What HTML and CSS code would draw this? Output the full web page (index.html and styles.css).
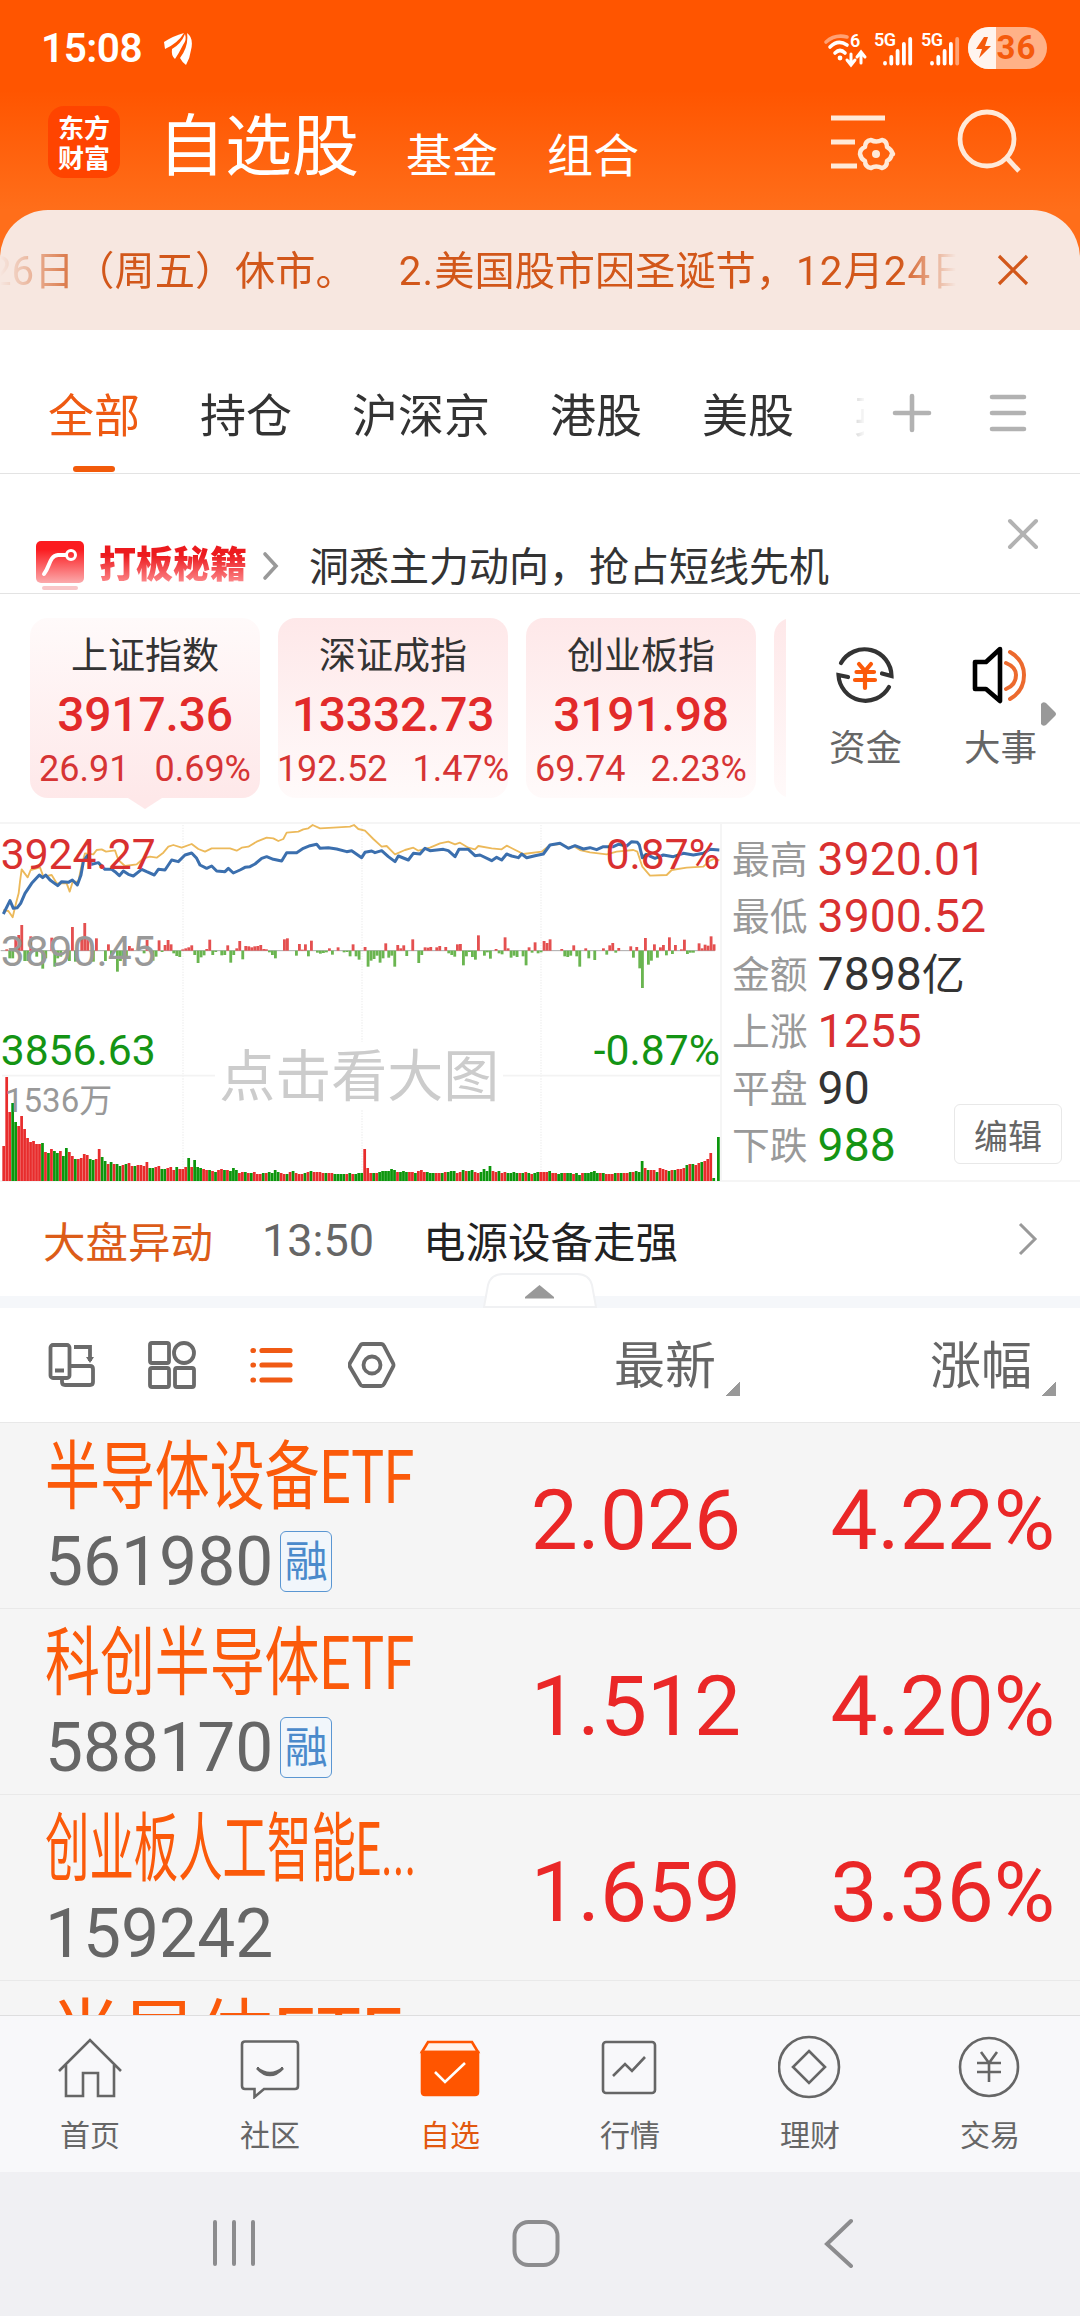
FILE: index.html
```html
<!doctype html>
<html lang="zh-CN">
<head>
    <meta charset="utf-8">
    <title>自选股</title>
    <meta name="viewport" content="width=1080">
    <link rel="stylesheet" href="styles.css">
</head>
<body>
<div class="header">
    <div class="status">
        <span class="clock">15:08</span>
        <svg class="status-app" width="30" height="34" viewBox="0 0 30 34" fill="#fff">
            <path d="M1 10 Q10 4 21 1 Q15 11 2 17 Z"></path>
            <path d="M22 2 Q24 8 20 13 Q16 21 12 27 Q8 24 9 17 Q18 12 22 2 Z"></path>
            <path d="M24 1 Q31 6 28 18 Q27 26 23 33 Q19 30 17 26 Q26 14 24 1 Z"></path>
        </svg>
        <svg class="status-icons" width="226" height="44" viewBox="822 26 226 44">
            <g fill="none" stroke="#fff" stroke-width="3.6" stroke-linecap="round">
                <path d="M826 42 Q835 34 847 37" opacity=".45"></path>
                <path d="M830 47 Q838 39 847 45"></path>
                <path d="M835 53 Q840 48 845 53"></path>
                <path d="M851 54 V64 M847 60 L851 65 L855 60 M861 63 V53 M857 57 L861 52 L865 57" stroke-width="3"></path>
            </g>
            <circle cx="840" cy="58" r="2.4" fill="#fff"></circle>
            <g class="status-text">
                <text x="850" y="47" font-size="18">6</text>
                <text x="874" y="46" font-size="18" textLength="22">5G</text>
                <text x="921" y="46" font-size="18" textLength="22">5G</text>
            </g>
            <g stroke="#fff" stroke-width="3.8" stroke-linecap="round">
                <path d="M885 63 V63.5 M891.300 57 V63.500 M897.600 51 V63.500 M903.900 44 V63.500 M910.200 39 V63.500"></path>
                <path d="M932 63 V63.5 M938.300 57 V63.500 M944.600 51 V63.500 M950.900 44 V63.500"></path>
                <path d="M957.200 39 V63.500" opacity=".45"></path>
            </g>
            <rect x="968" y="27" width="79" height="42" rx="21" fill="#ffb187"></rect>
            <path d="M996 27 H989 A21 21 0 0 0 989 69 H996 Z" fill="#fff4ef"></path>
            <path d="M984 37 L976 49 H982 L979 58 L991 46 H985 L988 37 Z" fill="#f55a0c"></path>
            <text x="996.500" y="59" font-size="33" font-weight="700" fill="#f55a0c" textLength="39">36</text>
        </svg>
    </div>
    <div class="title-bar">
        <div class="logo"><div>东方</div><div>财富</div></div>
        <h1>自选股</h1>
        <span class="sub-title">基金</span>
        <span class="sub-title">组合</span>
        <svg class="manage" width="60" height="60" viewBox="828 112 60 60" fill="none" stroke="#ffe9d8" stroke-width="5">
            <path d="M831 118 H885 M831 142 H855 M831 166 H857"></path>
            <path d="M893 154 Q891 149 887 147 Q887 141 882 140 Q876 143 871 140 Q865 141 865 147 Q860 149 860 154 Q861 159 865 161 Q865 167 871 168 Q876 165 882 168 Q887 167 887 161 Q891 159 892 154 Z" stroke-width="4.500" stroke-linejoin="round"></path>
            <circle cx="876" cy="154" r="4" fill="#ffe9d8" stroke="none"></circle>
        </svg>
        <svg class="search" width="66" height="66" viewBox="956 108 66 66" fill="none" stroke="#ffe9d8" stroke-width="4.800">
            <circle cx="987" cy="139" r="27"></circle>
            <path d="M1006 157 L1019 171"></path>
        </svg>
    </div>
</div>

<div class="notice">
    <div class="notice-text"><span>26日（周五）休市。</span><span><em>2.</em>美国股市因圣诞节，<em>12</em>月<em>24</em>日</span></div>
    <svg width="32" height="32" viewBox="0 0 32 32" stroke="#d2571a" stroke-width="3.200">
        <path d="M2 2 L30 30 M30 2 L2 30"></path>
    </svg>
</div>

<div class="tabs">
    <div class="tab-list">
        <span class="active">全部</span><span>持仓</span><span>沪深京</span><span>港股</span><span>美股</span><span>英股</span>
    </div>
    <svg width="40" height="40" viewBox="0 0 40 40" stroke="#b2b2b2" stroke-width="4.600" stroke-linecap="round">
        <path d="M3 20 H37 M20 3 V37"></path>
    </svg>
    <svg width="40" height="40" viewBox="0 0 40 40" stroke="#b2b2b2" stroke-width="4.600" stroke-linecap="round">
        <path d="M4 4 H36 M4 20 H36 M4 36 H36"></path>
    </svg>
</div>

<div class="promo">
    <svg width="48" height="50" viewBox="0 0 48 50">
        <defs>
            <linearGradient id="promo-red" x1="0" y1="0" x2="0" y2="1">
                <stop offset=".2" stop-color="#fb1b1f"></stop>
                <stop offset="1" stop-color="#fbaaac"></stop>
            </linearGradient>
        </defs>
        <rect width="48" height="42" rx="5" fill="url(#promo-red)"></rect>
        <rect x="6" y="45" width="36" height="4" rx="2" fill="#f8c6c8"></rect>
        <path d="M8 33 C14 26 13 15 22 14 H30" fill="none" stroke="#fff" stroke-width="4" stroke-linecap="round"></path>
        <circle cx="35" cy="14" r="4.500" fill="none" stroke="#fff" stroke-width="3"></circle>
    </svg>
    <b>打板秘籍</b>
    <svg width="18" height="30" viewBox="0 0 18 30" fill="none" stroke="#999" stroke-width="3.600" stroke-linecap="round">
        <path d="M3 3 L14 15 L3 27"></path>
    </svg>
    <span>洞悉主力动向，抢占短线先机</span>
    <svg class="promo-close" width="32" height="32" viewBox="0 0 32 32" stroke="#b2b2b2" stroke-width="4" stroke-linecap="round">
        <path d="M3 3 L29 29 M29 3 L3 29"></path>
    </svg>
</div>

<div class="indices">
    <div class="index-list">
        <div class="index current"><p>上证指数</p><b>3917.36</b><div><span>26.91</span><span>0.69%</span></div></div>
        <div class="index"><p>深证成指</p><b>13332.73</b><div><span>192.52</span><span>1.47%</span></div></div>
        <div class="index"><p>创业板指</p><b>3191.98</b><div><span>69.74</span><span>2.23%</span></div></div>
        <div class="index"></div>
    </div>
    <div class="shortcut">
        <svg width="64" height="64" viewBox="0 0 64 64" fill="none" stroke="#333" stroke-width="4.200">
            <path d="M8 20 A27 27 0 0 1 58.500 33 L49 30.500" stroke-linecap="round"></path>
            <path d="M56 44 A27 27 0 0 1 5.500 32 L15 34" stroke-linecap="round"></path>
            <path d="M26 21 L32 28 L38 21 M32 28 V45 M23.500 29 H41 M22 37 H42" stroke="#fb5a0a" stroke-linecap="round"></path>
        </svg>
        <span>资金</span>
    </div>
    <div class="shortcut news">
        <svg width="64" height="64" viewBox="0 0 64 64" fill="none" stroke="#000" stroke-width="4.600" stroke-linejoin="round">
            <path d="M32 6 L18 19 H7 V46 H18 L32 58 Z"></path>
            <path d="M38 20 Q48 24 48 32 Q48 42 38 46 M42 9 Q56 17 56 32 Q56 48 42 56" stroke="#ec6a2e" stroke-width="4" stroke-linecap="round"></path>
        </svg>
        <span>大事</span>
    </div>
    <svg class="more" width="15" height="24" viewBox="0 0 15 24" fill="#999">
        <path d="M0 2 Q2 -1 5 1 L14 10 Q16 12 14 14 L5 23 Q2 25 0 22 Z"></path>
    </svg>
</div>

<div class="market">
    <svg class="chart" width="720" height="360" viewBox="0 21 2160 1080">
        <g stroke="#f3f3f3" stroke-width="5">
            <path d="M6 782 H2160"></path>
            <path d="M549 30 V1098 M1086 30 V1098 M1623 30 V1098" stroke-dasharray="4 4"></path>
        </g>
        <rect x="645" y="680" width="864" height="205" fill="#fff"></rect>
        <path d="M2 407 H2145" stroke="#a9a9a9" stroke-width="3"></path>
        <g id="flow"></g>
        <g id="volume"></g>
        <polyline class="average" points="10,285 25,288 38,307 48,265 56,235 60,200 65,163 83,187 92,165 120,157 130,185 155,180 170,205 200,205 209,230 218,200 235,200 245,150 255,115 280,118 290,105 305,103 318,110 345,106 355,135 375,153 410,148 430,130 450,125 470,128 490,113 505,95 520,90 545,98 575,87 595,102 615,110 635,100 690,100 710,107 725,98 745,95 770,80 800,68 820,70 835,78 850,72 860,53 895,50 910,43 925,40 938,30 960,40 1000,38 1050,35 1062,30 1075,42 1095,47 1120,72 1145,95 1160,93 1185,118 1215,105 1240,98 1255,107 1290,98 1320,85 1345,80 1365,88 1380,83 1405,98 1425,103 1435,93 1475,100 1505,103 1520,92 1540,102 1570,117 1625,110 1650,90 1680,87 1705,98 1720,93 1740,105 1770,112 1820,118 1850,110 1900,105 1912,110 1927,155 1950,182 2000,180 2015,165 2060,158 2110,155 2130,137 2145,130 2158,137"></polyline>
        <polyline class="price" points="10,297 30,257 40,280 52,278 62,265 75,235 95,205 118,180 128,188 137,180 150,195 173,212 185,200 205,202 217,195 232,210 243,180 250,140 262,122 275,148 295,143 315,163 335,163 345,170 358,182 370,168 385,178 400,183 425,163 440,170 463,180 475,163 495,165 515,135 535,140 555,120 575,114 590,130 600,150 620,160 635,153 650,168 675,170 685,160 700,174 720,165 735,157 750,155 765,147 785,130 800,125 820,133 845,138 860,113 890,113 910,100 930,92 950,88 960,100 985,98 1010,102 1040,110 1055,107 1085,128 1095,112 1115,108 1125,113 1145,107 1165,125 1185,140 1195,123 1225,135 1240,115 1260,117 1275,100 1290,107 1330,103 1345,107 1365,125 1377,103 1405,103 1425,122 1440,120 1475,137 1490,127 1505,135 1520,117 1535,123 1555,128 1565,117 1580,128 1605,122 1630,117 1650,90 1680,85 1705,100 1725,92 1750,102 1770,98 1790,104 1810,95 1840,95 1855,88 1880,93 1895,80 1912,82 1918,90 1927,128 1938,118 1965,130 1990,120 2020,125 2050,115 2080,120 2110,115 2130,103 2158,105"></polyline>
        <g font-size="128">
            <text class="up" x="2" y="162">3924.27</text>
            <text class="flat" x="2" y="453">3890.45</text>
            <text class="down" x="2" y="750">3856.63</text>
            <text class="up" x="2160" y="162" text-anchor="end">0.87%</text>
            <text class="down" x="2160" y="750" text-anchor="end">-0.87%</text>
            <text class="flat" x="15" y="891" font-size="99">1536万</text>
            <text class="hint" x="658" y="844" font-size="168">点击看大图</text>
        </g>
    </svg>
    <div class="stats">
        <p>最高<span class="up">3920.01</span></p>
        <p>最低<span class="up">3900.52</span></p>
        <p>金额<span>7898<small>亿</small></span></p>
        <p>上涨<span class="up">1255</span></p>
        <p>平盘<span>90</span></p>
        <p>下跌<span class="down">988</span></p>
        <button>编辑</button>
    </div>
</div>

<div class="alert">
    <span class="alert-type">大盘异动</span>
    <span class="alert-time">13:50</span>
    <span>电源设备走强</span>
    <svg width="20" height="34" viewBox="0 0 20 34" fill="none" stroke="#999" stroke-width="3">
        <path d="M2 2 L17 17 L2 32"></path>
    </svg>
    <svg class="collapse" width="114" height="36" viewBox="0 0 114 36">
        <path d="M1 34 L5 12 Q8 1 20 1 H94 Q106 1 109 12 L113 34 Z" fill="#fff" stroke="#f0f1f3" stroke-width="2"></path>
        <path d="M56.500 12 L71 24 V25.500 H42 V24 Z" fill="#999"></path>
    </svg>
</div>

<div class="toolbar">
    <div class="tools">
        <svg width="48" height="48" viewBox="0 0 48 48">
            <rect x="2.500" y="4" width="19" height="33" rx="2.500"></rect>
            <path d="M7 29.500 H16 M26 6 H42 V20 M22 25 H42 Q45 25 45 28 V41 Q45 44 42 44 H17 Q14 44 14 41 V37"></path>
            <path d="M38 16 H46 L42 22 Z" fill="#6a6a6a" stroke="none"></path>
        </svg>
        <svg width="48" height="48" viewBox="0 0 48 48">
            <rect x="2" y="2" width="19" height="20" rx="2"></rect>
            <circle cx="36" cy="12" r="10"></circle>
            <rect x="2" y="27" width="19" height="19" rx="2"></rect>
            <rect x="27" y="27" width="19" height="19" rx="2"></rect>
        </svg>
        <svg class="selected" width="48" height="48" viewBox="0 0 48 48">
            <path d="M5 9.500 H5.500 M5 24 H5.500 M5 39 H5.500 M14 9.500 H42 M14 24 H42 M14 39 H42"></path>
        </svg>
        <svg width="48" height="48" viewBox="0 0 48 48">
            <path d="M15 3 H33 Q35 3 36 5 L45 22 Q46 24 45 26 L36 43 Q35 45 33 45 H15 Q13 45 12 43 L2 26 Q1 24 2 22 L12 5 Q13 3 15 3 Z"></path>
            <circle cx="24" cy="24" r="8.500"></circle>
        </svg>
    </div>
    <span class="sort">最新</span>
    <span class="sort">涨幅</span>
</div>

<div class="stocks">
    <div class="stock">
        <div class="name"><span class="fit-8">半导体设备ETF</span></div>
        <div class="code">561980<i>融</i></div>
        <div class="latest">2.026</div>
        <div class="change">4.22%</div>
    </div>
    <div class="stock">
        <div class="name"><span class="fit-8">科创半导体ETF</span></div>
        <div class="code">588170<i>融</i></div>
        <div class="latest">1.512</div>
        <div class="change">4.20%</div>
    </div>
    <div class="stock">
        <div class="name"><span class="fit-11">创业板人工智能E...</span></div>
        <div class="code">159242</div>
        <div class="latest">1.659</div>
        <div class="change">3.36%</div>
    </div>
    <div class="stock">
        <div class="name"><span class="fit-6">半导体ETF</span></div>
    </div>
</div>

<div class="nav">
    <div>
        <svg width="64" height="64" viewBox="0 0 64 64"><path d="M1 36 L32 5 L63 36 M8 30 V61 H25 V38 H40 V61 H56 V30"></path></svg>
        首页
    </div>
    <div>
        <svg width="64" height="64" viewBox="0 0 64 64"><path d="M7 6.500 H57 Q60 6.500 60 9.500 V51 Q60 54 57 54 H26 L16.500 62 V54 H7 Q4 54 4 51 V9.500 Q4 6.500 7 6.500 Z"></path><path d="M19 33 Q32 47 45 33 Q32 43 19 33 Z"></path></svg>
        社区
    </div>
    <div class="selected">
        <svg width="64" height="64" viewBox="0 0 64 64"><path d="M4 17 L10 7 H54 L60 17 Z" fill="#fff3ea"></path><path d="M4 17 H60 V57 Q60 60 57 60 H7 Q4 60 4 57 Z" fill="#ff5500"></path><path d="M17 37 L27 47 L47 28" stroke="#fff"></path></svg>
        自选
    </div>
    <div>
        <svg width="64" height="64" viewBox="1 0 64 64"><rect x="6" y="7" width="52" height="51" rx="3"></rect><path d="M16 41 L28 29 L35 36 L48 22"></path></svg>
        行情
    </div>
    <div>
        <svg width="64" height="64" viewBox="1 0 64 64"><circle cx="32" cy="32" r="30"></circle><path d="M32 16 L48 32 L32 48 L16 32 Z"></path></svg>
        理财
    </div>
    <div>
        <svg width="64" height="64" viewBox="1 0 64 64"><circle cx="32" cy="32" r="29"></circle><path d="M24 17 L32 28 L40 17 M32 28 V47 M20 28 H44 M20 37 H44"></path></svg>
        交易
    </div>
</div>

<div class="system">
    <svg width="50" height="50" viewBox="0 0 50 50"><path d="M6 4 V46 M25 4 V46 M44 4 V46"></path></svg>
    <svg width="50" height="50" viewBox="0 0 50 50"><rect x="3.500" y="4" width="43" height="43" rx="14"></rect></svg>
    <svg width="50" height="50" viewBox="0 0 50 50"><path d="M38 3 L14 26 L38 48"></path></svg>
</div>
<script src="chart.js"></script>
</body>
</html>
```

FILE: styles.css
```css
* {
    box-sizing: border-box;
}

body {
    margin: 0;
    width: 1080px;
    height: 2316px;
    overflow: hidden;
    display: flex;
    flex-direction: column;
    background: linear-gradient(#ff5500 90px, #ff6e1a 210px, #ff6e1a 330px, #fff 330px);
    font-family: Roboto, "Noto Sans CJK SC", sans-serif;
    color: #333;
}

p, h1 {
    margin: 0;
    font-weight: normal;
}

svg {
    display: block;
    flex: none;
}

.up {
    color: #d93030;
    fill: #d93030;
}

.down {
    color: #149414;
    fill: #149414;
}

.flat {
    fill: #999;
}

/* header */

.header {
    height: 210px;
    color: #fff;
}

.status {
    height: 94px;
    display: flex;
    padding: 26px 32px 0 41px;
}

.clock {
    font-size: 40.500px;
    font-weight: 600;
    line-height: 45px;
    letter-spacing: -.5px;
    width: 122px;
}

.status-app {
    margin-top: 6px;
}

.status-icons {
    margin-left: auto;
}

.status-text {
    fill: #fff;
    font-weight: 600;
}

.title-bar {
    display: flex;
    align-items: flex-start;
    padding-left: 48px;
}

.logo {
    width: 72px;
    height: 72px;
    margin-top: 12px;
    padding-top: 6px;
    border-radius: 16px;
    background: #ff4400;
    font: 700 26px/30px "Noto Sans CJK SC", sans-serif;
    text-align: center;
}

.title-bar h1 {
    margin-left: 38px;
    font-size: 67px;
    line-height: 106px;
}

.sub-title {
    margin: 10px 2px 0 47px;
    font-size: 46px;
    line-height: 104px;
}

.manage {
    margin: 18px 0 0 187px;
    overflow: visible;
}

.search {
    margin: 14px 0 0 68px;
}

/* notice */

.notice {
    height: 120px;
    display: flex;
    align-items: center;
    background: #f7e7e0;
    border-radius: 48px 48px 0 0;
}

.notice-text {
    width: 956px;
    margin-right: 41px;
    padding-bottom: 6px;
    overflow: hidden;
    white-space: nowrap;
    font-size: 40.200px;
    color: #d2571a;
    -webkit-mask: linear-gradient(90deg, transparent, #000 90px, #000 900px, transparent);
    mask: linear-gradient(90deg, transparent, #000 90px, #000 900px, transparent);
}

.notice-text span {
    margin: 0 54px 0 -11px;
}

.notice-text em {
    font-style: normal;
    letter-spacing: 1.200px;
}

/* tabs */

.tabs {
    height: 144px;
    display: flex;
    align-items: center;
    padding-left: 48px;
    padding-bottom: 1px;
    gap: 38px;
    background: #fff;
    border-bottom: 1px solid #e3e3e3;
}

.tabs svg {
    margin: 24px 0 0 -10px;
}

.tabs svg + svg {
    margin-left: 18px;
}

.tab-list {
    width: 816px;
    height: 144px;
    display: flex;
    gap: 60px;
    overflow: hidden;
    font-size: 46px;
    line-height: 174px;
    white-space: nowrap;
    -webkit-mask: linear-gradient(90deg, #000 760px, transparent 818px);
    mask: linear-gradient(90deg, #000 760px, transparent 818px);
}

.tab-list .active {
    color: #ee5a12;
    position: relative;
}

.tab-list .active::after {
    content: "";
    position: absolute;
    left: 25px;
    top: 137px;
    width: 42px;
    height: 6px;
    border-radius: 3px;
    background: #f25a0a;
}

/* promo */

.promo {
    height: 120px;
    display: flex;
    padding: 67px 42px 0 36px;
    background: #fff;
    border-bottom: 1px solid #e3e3e3;
}

.promo b {
    margin: -6px 15px 0 15px;
    font: 900 37px/54px "Noto Sans CJK SC", sans-serif;
    color: transparent;
    background: linear-gradient(#ec1a1e 35%, #ff9a9c 90%);
    -webkit-background-clip: text;
    background-clip: text;
}

.promo b + svg {
    margin-top: 10px;
}

.promo span {
    margin-left: 29px;
    font-size: 40px;
    line-height: 54px;
}

.promo-close {
    margin: -23px -1px 0 auto;
}

/* indices */

.indices {
    height: 228px;
    display: flex;
    background: #fff;
}

.index-list {
    width: 786px;
    padding: 24px 0 0 30px;
    display: flex;
    gap: 18px;
    overflow: hidden;
}

.index {
    flex: none;
    width: 230px;
    height: 180px;
    border-radius: 18px;
    background: linear-gradient(#fee8e9, #fffafa);
    text-align: center;
    white-space: nowrap;
}

.index.current {
    position: relative;
    background: linear-gradient(#fffafa, #fee8e9);
}

.index.current::after {
    content: "";
    position: absolute;
    left: 98px;
    top: 100%;
    border: 17px solid transparent;
    border-width: 11px 17px 0;
    border-top-color: #fee8e9;
}

.index p {
    font-size: 37px;
    line-height: 78px;
}

.index b {
    display: block;
    font-size: 48px;
    font-weight: 500;
    line-height: 38px;
    letter-spacing: -.200px;
    color: #e22a2a;
}

.index div {
    display: flex;
    justify-content: center;
    gap: 25px;
    font-size: 36px;
    line-height: 70px;
    color: #d63434;
}

.shortcut {
    width: 72px;
    margin-left: 43px;
    padding-top: 49px;
    font-size: 36.500px;
    line-height: 83px;
    color: #666;
    white-space: nowrap;
}

.shortcut svg {
    margin-left: 4px;
}

.shortcut.news {
    margin-left: 63px;
}

.more {
    margin: 108px 0 0 5px;
}

/* market */

.market {
    height: 360px;
    display: flex;
    background: #fff;
    border-top: 2px solid #f5f5f5;
    border-bottom: 2px solid #f5f5f5;
}

.chart {
    margin-top: -2px;
}

.chart polyline {
    fill: none;
    stroke-linejoin: round;
}

.average {
    stroke: #ecb95a;
    stroke-width: 5.500;
}

.price {
    stroke: #3b6fae;
    stroke-width: 9;
}

.hint {
    fill: #ccc;
}

.bar-up {
    fill: #e45050;
}

.bar-down {
    fill: #6ab550;
}

.volume-up {
    fill: #e82c2c;
}

.volume-down {
    fill: #0c960c;
}

.stats {
    position: relative;
    flex: 1;
    padding: 5px 0 0 10px;
    border-left: 2px solid #f5f5f5;
}

.stats p {
    height: 57.300px;
    display: flex;
    align-items: baseline;
    font-size: 37.800px;
    line-height: 57px;
    color: #999;
}

.stats span {
    margin-left: 10px;
    font-size: 46.300px;
    transform: translateY(2px);
}

.stats span:not([class]) {
    color: #333;
}

.stats small {
    font-size: 43px;
}

.stats button {
    position: absolute;
    right: 18px;
    bottom: 16px;
    width: 108px;
    height: 60px;
    padding: 0;
    border: 1px solid #e8e8e8;
    border-radius: 6px;
    background: #fff;
    font: 34px Roboto, "Noto Sans CJK SC", sans-serif;
    color: #666;
}

/* alert */

.alert {
    position: relative;
    height: 126px;
    display: flex;
    align-items: baseline;
    padding: 3px 42px 0 43px;
    background: #fff;
    border-bottom: 12px solid #f5f7fa;
    font-size: 42.500px;
    line-height: 116px;
    color: #222;
}

.alert-type {
    color: #dc5c18;
}

.alert-time {
    margin: 0 49px 0 49px;
    font-size: 45px;
    color: #666;
    transform: translateY(-2px);
}

.alert > svg {
    align-self: flex-start;
    margin: 37px 0 0 auto;
}

.alert .collapse {
    position: absolute;
    left: 483px;
    top: 91px;
    margin: 0;
}

/* toolbar */

.toolbar {
    height: 115px;
    display: grid;
    grid-template-columns: 500px 240px 316px;
    align-items: center;
    background: #fff;
    border-bottom: 1px solid #e8e8e8;
}

.tools {
    display: flex;
    gap: 52px;
    padding-left: 48px;
    fill: none;
    stroke: #6a6a6a;
    stroke-width: 3.8;
}

.tools .selected {
    stroke: #f05a14;
    stroke-width: 5.200;
    stroke-linecap: round;
}

.sort {
    justify-self: end;
    padding-right: 24px;
    background: linear-gradient(135deg, transparent 50%, #999 50%) no-repeat 100% 100% / 15px 15px;
    font-size: 51px;
    line-height: 58px;
    color: #666;
    padding-top: 3px;
}

/* stocks */

.stocks {
    flex: 1;
    min-height: 0;
    overflow: hidden;
    background: #f5f5f5;
}

.stock {
    height: 186px;
    display: grid;
    grid-template: 103px 82px / 500px 241px 1fr;
    padding-right: 25px;
    border-bottom: 1px solid #e9e9e9;
    white-space: nowrap;
}

.name {
    padding-left: 45px;
    font-size: 75px;
    line-height: 108px;
    color: #fb5a0a;
}

.name span {
    display: inline-block;
    transform-origin: 0 50%;
}

.fit-8 {
    transform: scaleX(.732);
}

.fit-11 {
    transform: scaleX(.592);
}

.fit-6 {
    margin-left: 3px;
}

.code {
    grid-row: 2;
    display: flex;
    align-items: flex-start;
    padding-left: 45px;
    font-size: 67.700px;
    line-height: 73px;
    color: #666;
}

.code i {
    width: 52px;
    height: 61px;
    margin: 5px 0 0 7px;
    border: 1.500px solid #5a96d2;
    border-radius: 6px;
    background: #f1f6fb;
    font-size: 43px;
    font-style: normal;
    line-height: 60px;
    color: #4a8acb;
    display: flex;
    justify-content: center;
}

.latest, .change {
    grid-row: 1 / 3;
    text-align: right;
    font-size: 83.700px;
    line-height: 195px;
    color: #ea2727;
}

.latest {
    grid-column: 2;
}

/* bottom bars */

.nav {
    height: 157px;
    display: flex;
    background: #f8f8fa;
    border-top: 1px solid #dededf;
    font-size: 30px;
    line-height: 73px;
    color: #666;
}

.nav div {
    flex: 1;
    padding-top: 19px;
    text-align: center;
}

.nav svg {
    margin: 0 auto;
    fill: none;
    stroke: #666;
    stroke-width: 2.6;
}

.nav .selected {
    color: #e2580f;
}

.nav .selected svg {
    stroke: #ff5500;
}

.system {
    height: 144px;
    display: flex;
    gap: 252px;
    padding: 46px 0 0 209px;
    background: #f0f0f3;
    fill: none;
    stroke: #8c8c8e;
    stroke-width: 4;
    stroke-linecap: round;
}
```

FILE: chart.js
```js
const svgNs = 'http://www.w3.org/2000/svg';

const addBar = (parent, className, x, y, width, height) => {
    const bar = document.createElementNS(svgNs, 'rect');
    bar.setAttribute('class', className);
    bar.setAttribute('x', x);
    bar.setAttribute('y', y);
    bar.setAttribute('width', width);
    bar.setAttribute('height', height);
    parent.appendChild(bar);
};

// Volume per minute, negative when the price fell
const volume = [
    35, 104, 69, -78, -59, 55, 65, 52, 43, 39, 40, 37, 37, -38, 29, -28, 32, -30, -28, 30,
    -25, -33, 29, 25, -22, 22, 23, 27, 26, -22, -21, 22, 32, -24, -20, 17, -19, 17, -17, -15,
    16, -17, 18, 15, -15, 16, 16, 15, 19, -13, -13, 14, 15, -12, -12, 13, 14, 11, -14, 12,
    12, 14, -23, 14, -21, -14, -13, 12, 11, -11, 10, -9, 11, 12, -11, 11, -10, -13, -11, 8,
    9, -9, 8, -8, 9, 7, 7, -8, 8, -9, -8, -11, -9, 8, 7, -7, 9, -10, 8, 7,
    7, -8, 9, -10, 9, 9, 9, 8, -8, 8, 8, -7, -7, -7, -7, 7, -8, 7, -7, -8,
    -8, 32, 13, 8, -8, 8, -9, -10, -10, -10, -12, -11, 9, -9, -10, -9, 9, 9, -8, 10,
    11, 9, -9, -8, -8, 8, 8, -8, 9, -9, -10, -10, 8, 9, -11, 10, -10, -11, 9, 8,
    -9, -12, -10, -15, 10, 9, -10, 8, 9, -8, -8, -9, -8, 8, -8, 9, -8, 7, -8, -9,
    9, 9, 9, -10, 8, 8, -7, -8, 8, -8, -8, 7, -8, -6, 8, -8, -8, -9, -10, -8,
    8, -8, 7, 7, 7, -8, 8, -8, 8, 8, -9, 9, -10, -9, -20, 13, -11, 11, 11, -9,
    13, 12, 11, -10, 11, -11, 12, 12, 13, -16, 17, -17, 16, 18, -19, 20, 22, 28, -3, 0, -44
];

const volumeNode = document.getElementById('volume');
volume.forEach((v, i) => {
    const x = i === volume.length - 1 ? 2151 : 7 + i * 8.95;
    const height = Math.abs(v) * 3;
    addBar(volumeNode, v > 0 ? 'volume-up' : 'volume-down', x, 1098 - height, 8.2, height);
});

// Money flow, [position, amount]
const flow = [
    [20, 4], [29, -23], [38, -23], [47, 37], [56, 47], [65, 77], [74, -31], [83, -31], [92, 43], [110, -18],
    [128, -54], [137, -23], [155, 39], [164, -48], [173, -23], [182, -18], [208, -31], [217, 71], [226, -33], [245, 35],
    [254, 83], [263, 37], [280, -33], [289, 37], [316, -31], [325, 19], [334, -18], [352, -63], [361, -31], [370, -18],
    [379, -23], [388, 14], [397, 7], [432, -8], [441, 32], [459, -30], [468, -18], [477, 31], [486, -4], [495, 17],
    [504, 32], [513, 19], [521, -8], [530, -16], [539, -19], [548, 4], [557, 7], [566, 10], [575, 16], [584, -13],
    [594, -37], [603, -20], [612, -14], [620, 5], [629, 33], [638, -13], [647, -4], [665, -14], [674, -13], [683, 16],
    [692, -36], [701, -13], [710, 7], [719, 29], [728, -26], [737, 14], [746, 13], [755, 10], [764, 13], [773, 14],
    [782, 17], [791, 5], [799, 4], [808, -5], [817, -13], [826, -23], [853, 34], [862, 37], [889, -15], [898, 20],
    [907, 3], [916, 19], [925, -17], [934, 30], [952, -6], [961, -9], [970, -7], [979, -5], [988, 7], [997, -12],
    [1014, 10], [1032, -5], [1041, -4], [1050, -17], [1059, 19], [1068, -17], [1077, -27], [1095, 11], [1104, -48],
    [1113, -30], [1122, -25], [1131, -15], [1140, -36], [1149, -23], [1157, 22], [1166, -21], [1175, -15], [1184, -48],
    [1193, 17], [1202, 7], [1211, 16], [1220, -16], [1238, 34], [1256, -37], [1265, -13], [1275, 10], [1284, 9], [1292, 11],
    [1310, 10], [1319, 14], [1337, 11], [1346, -8], [1355, -13], [1364, -18], [1372, 19], [1381, 20], [1390, -44], [1399, -17],
    [1408, -4], [1417, -19], [1426, -27], [1435, 46], [1453, -15], [1462, -5], [1471, -24], [1488, 5], [1497, -8], [1506, -11],
    [1515, 40], [1524, 7], [1533, -21], [1542, -15], [1551, -19], [1569, -17], [1578, -44], [1587, 10], [1596, -6], [1605, 25],
    [1614, -8], [1623, -5], [1632, 29], [1641, 23], [1650, 34], [1685, 5], [1694, -17], [1703, -19], [1712, -15], [1721, 16],
    [1730, -17], [1739, -48], [1757, 7], [1766, -23], [1784, -28], [1810, 7], [1820, -12], [1829, 16], [1838, 23], [1847, -6],
    [1856, 8], [1892, 13], [1900, -21], [1910, 11], [1919, -53], [1927, -112], [1936, 38], [1945, -42], [1954, -30], [1963, 19],
    [1972, -21], [1981, 10], [1990, 17], [1999, -14], [2008, 40], [2017, -10], [2026, 17], [2044, 4], [2053, 33], [2062, -10],
    [2071, -6], [2080, -6], [2097, 22], [2106, 7], [2115, 18], [2124, 15], [2133, 43], [2142, 19]
];

const flowNode = document.getElementById('flow');
flow.forEach(([x, v]) => {
    addBar(flowNode, v > 0 ? 'bar-up' : 'bar-down', x - 4, v > 0 ? 407 - v : 407, 8.5, Math.abs(v));
});
```
